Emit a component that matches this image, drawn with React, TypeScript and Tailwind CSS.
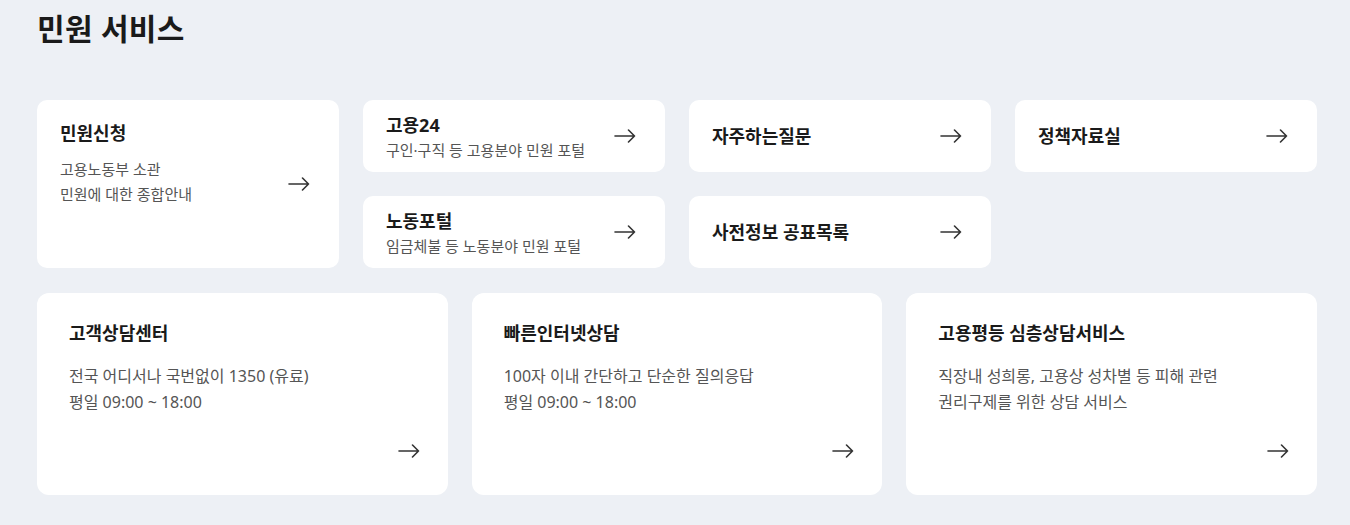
import React from 'react';

const Arrow = () => (
    <svg width="22" height="14" viewBox="0 0 22 14" fill="none" className="shrink-0">
        <path d="M1 7H20.5M14.5 1L20.5 7L14.5 13" stroke="#333" strokeWidth="1.6" strokeLinecap="round" strokeLinejoin="round" />
    </svg>
);

const SmallCard: React.FC<{ title: string; desc?: string }> = ({ title, desc }) => (
    <div className="bg-white rounded-[10px] h-[72px] pl-[23px] pr-[29px] flex items-center justify-between">
        <div className="flex flex-col">
            <span className="text-[18px] font-bold leading-6 text-[#1a1a1a]">{title}</span>
            {desc && <span className="text-[15px] leading-5 text-[#555] mt-[3px]">{desc}</span>}
        </div>
        <Arrow />
    </div>
);

const BigCard: React.FC<{ title: string; lines: string[] }> = ({ title, lines }) => (
    <div className="bg-white rounded-[12px] h-[202px] pl-[32px] pr-[28px] pt-[28px] pb-[37px] flex flex-col">
        <span className="text-[18px] font-bold leading-6 text-[#1a1a1a]">{title}</span>
        <div className="mt-[18px] flex flex-col">
            {lines.map(l => (
                <span key={l} className="text-[16px] leading-[26px] text-[#555]">{l}</span>
            ))}
        </div>
        <div className="mt-auto flex justify-end">
            <Arrow />
        </div>
    </div>
);

export default function App() {
    return (
        <div
            className="w-[1350px] h-[525px] bg-[#edf0f5] pl-[37px] pt-[9px] overflow-hidden"
            style={{ fontFamily: '"Noto Sans", "Noto Sans CJK KR", sans-serif' }}
        >
            <h1 className="text-[30px] font-bold leading-10 text-[#1a1a1a] tracking-[0.01em]">민원 서비스</h1>

            <div className="w-[1280px] mt-[51px] grid grid-cols-4 gap-x-6 gap-y-6">
                <div className="row-span-2 bg-white rounded-[10px] pl-[23px] pr-[29px] pt-[21px] flex items-start justify-between">
                    <div className="flex flex-col">
                        <span className="text-[18px] font-bold leading-6 text-[#1a1a1a]">민원신청</span>
                        <div className="mt-3 flex flex-col">
                            <span className="text-[15px] leading-[25px] text-[#555]">고용노동부 소관</span>
                            <span className="text-[15px] leading-[25px] text-[#555]">민원에 대한 종합안내</span>
                        </div>
                    </div>
                    <div className="self-center -mt-[21px]">
                        <Arrow />
                    </div>
                </div>
                <SmallCard title="고용24" desc="구인·구직 등 고용분야 민원 포털" />
                <SmallCard title="자주하는질문" />
                <SmallCard title="정책자료실" />
                <SmallCard title="노동포털" desc="임금체불 등 노동분야 민원 포털" />
                <SmallCard title="사전정보 공표목록" />
            </div>

            <div className="w-[1280px] mt-[25px] grid grid-cols-3 gap-x-6">
                <BigCard title="고객상담센터" lines={['전국 어디서나 국번없이 1350 (유료)', '평일 09:00 ~ 18:00']} />
                <BigCard title="빠른인터넷상담" lines={['100자 이내 간단하고 단순한 질의응답', '평일 09:00 ~ 18:00']} />
                <BigCard title="고용평등 심층상담서비스" lines={['직장내 성희롱, 고용상 성차별 등 피해 관련', '권리구제를 위한 상담 서비스']} />
            </div>
        </div>
    );
}
